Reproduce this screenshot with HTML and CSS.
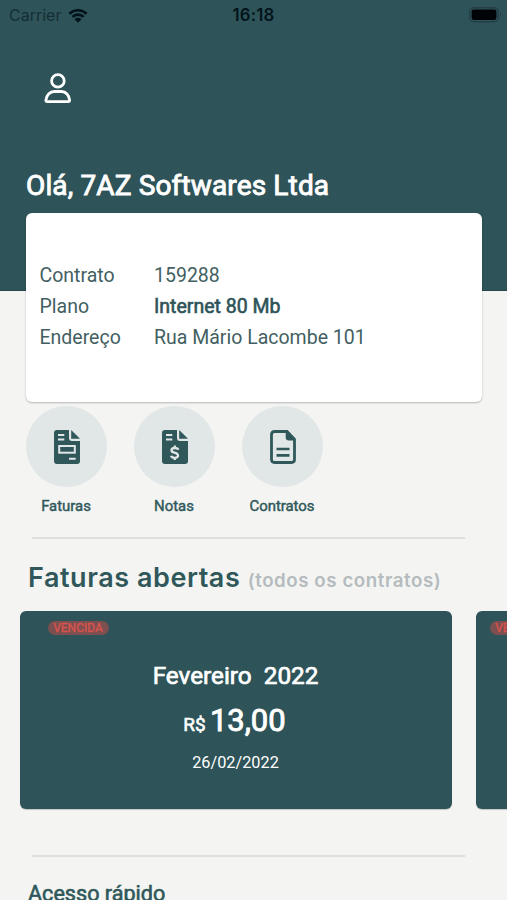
FILE: index.html
```html
<!DOCTYPE html>
<html lang="pt-BR">
<head>
<meta charset="utf-8">
<meta name="viewport" content="width=device-width, initial-scale=1">
<title>Central do assinante</title>
<link rel="stylesheet" href="styles.css">
</head>
<body>
<header class="header">
  <div class="status">
    <div class="carrier"><span>Carrier</span>
      <svg class="wifi" viewBox="0 0 20 15" width="20" height="15"><path d="M1.4 5.7a12.4 12.4 0 0 1 17.2 0M4.4 8.9a8 8 0 0 1 11.2 0" fill="none" stroke="currentColor" stroke-width="2.6"/><path d="M6.5 11.2a5 5 0 0 1 7 0L10 14.7z" fill="currentColor"/></svg>
    </div>
    <span class="clock">16:18</span>
    <svg class="battery" viewBox="0 0 34 16" width="34" height="16"><rect x=".7" y=".7" width="28.6" height="14" rx="4" fill="none" stroke="#233e44" stroke-width="1.4"/><rect x="2.6" y="2.4" width="24.8" height="10.6" rx="2.2" fill="#000407"/><path d="M31 5.5q2 2 0 4.5z" fill="#233e44"/></svg>
  </div>
  <svg class="user" viewBox="0 0 28 32" width="28" height="32" fill="none" stroke="#fff" stroke-width="2.8"><circle cx="13.9" cy="8.9" r="6.3"/><path d="M3.3 29.6h20.8q1.6 0 1.5-1.5c-.5-4.8-3.7-8.6-8.1-8.6h-7.2c-4.4 0-7.9 3.8-8.4 8.6q-.2 1.5 1.4 1.5z"/></svg>
  <h1 class="greeting">Olá, 7AZ Softwares Ltda</h1>
</header>
<main>
  <dl class="contract">
    <dt>Contrato</dt><dd>159288</dd>
    <dt>Plano</dt><dd class="strong">Internet 80 Mb</dd>
    <dt>Endereço</dt><dd>Rua Mário Lacombe 101</dd>
  </dl>
  <nav class="actions">
    <a class="action"><span class="circle">
      <svg viewBox="0 0 26 34" width="26" height="34"><path d="M3 0h12v8q0 3 3 3h8v20q0 3-3 3H3q-3 0-3-3V3q0-3 3-3z" fill="#30585b"/><path d="M17.2 0 26 8.7h-8.8z" fill="#30585b"/><path d="M4 5h6.3M4 9.6h6.3M15 28.8h6.7" stroke="#e1e6e7" stroke-width="2"/><rect x="5.2" y="16" width="15.6" height="6.7" fill="none" stroke="#e1e6e7" stroke-width="2"/></svg>
    </span><span class="label">Faturas</span></a>
    <a class="action"><span class="circle">
      <svg viewBox="0 0 26 34" width="26" height="34"><path d="M3 0h12v8q0 3 3 3h8v20q0 3-3 3H3q-3 0-3-3V3q0-3 3-3z" fill="#30585b"/><path d="M17.2 0 26 8.7h-8.8z" fill="#30585b"/><path d="M4 5h6.3M4 9.6h6.3" stroke="#e1e6e7" stroke-width="2"/><path d="M16.3 19.7q-.5-1.7-3.5-1.7c-4.2 0-4.3 3.9-.5 4.6 5 1 4.8 5.2.5 5.2q-3.2 0-3.7-2M12.8 15.6v2.4M12.8 27.6V30" fill="none" stroke="#e1e6e7" stroke-width="2.3"/></svg>
    </span><span class="label">Notas</span></a>
    <a class="action"><span class="circle">
      <svg viewBox="0 0 26 34" width="26" height="34"><path d="M4 1.5h13l7.5 7.7v20.3q0 3-3 3H4.5q-3 0-3-3v-25q0-3 3-3z" fill="none" stroke="#30585b" stroke-width="2.8"/><path d="M15.7 1h2L25 8.5v2h-6q-3.3 0-3.3-3.3z" fill="#30585b"/><path d="M6.5 19h13M6.5 25.4h13" stroke="#30585b" stroke-width="2.6"/></svg>
    </span><span class="label">Contratos</span></a>
  </nav>
  <hr>
  <h2 class="bills-title">Faturas abertas <small>(todos os contratos)</small></h2>
  <section class="carousel">
    <article class="bill">
      <span class="badge">VENCIDA</span>
      <div class="month">Fevereiro&nbsp; 2022</div>
      <div class="amount"><span>R$</span> 13,00</div>
      <div class="date">26/02/2022</div>
    </article>
    <article class="bill next"><span class="badge">VENCIDA</span></article>
  </section>
  <hr class="second">
  <h2 class="quick">Acesso rápido</h2>
</main>
</body>
</html>
```
FILE: styles.css
```css
* { box-sizing: border-box; }
html, body { margin: 0; height: 900px; overflow: hidden; }
body { background: #f4f5f2; color: #30585b; font-family: Roboto, "Liberation Sans", sans-serif; }
h1, h2, dl, dd { margin: 0; font-weight: 400; }
svg { display: block; flex: none; }
.header { height: 291px; background: #2e5358; border-bottom: 1px solid #25464b; }
.status { display: grid; grid-template-columns: 1fr auto 1fr; height: 30px; padding: 0 9px; align-items: center; font-family: Inter, sans-serif; color: #03131b; }
.carrier { display: flex; align-items: center; gap: 7px; font-size: 16px; letter-spacing: 0; color: #142f36; }
.wifi { color: #03131b; }
.clock { font-size: 16.8px; font-weight: 600; letter-spacing: .15px; }
.battery { justify-self: end; margin-right: -5px; }
.user { margin: 42px 0 0 44px; }
.greeting { margin: 64px 0 0 26px; height: 36px; font-size: 28px; line-height: 36px; letter-spacing: .14px; white-space: nowrap; color: #fff; -webkit-text-stroke: .9px; }
.contract { position: relative; display: grid; grid-template-columns: 114.5px 1fr; align-content: start; grid-auto-rows: 31px; width: 456px; height: 189px; margin: -78px 0 0 26px; padding: 47px 13.5px 0; border-radius: 6px; background: #fff; box-shadow: 0 1px 2px rgba(0,0,0,.25); font-size: 19.5px; line-height: 32px; color: #435f62; }
.strong { color: #2e5358; -webkit-text-stroke: .6px; }
.actions { display: flex; gap: 27px; margin: 4px 0 0 26px; height: 131px; }
.action { width: 81px; display: flex; flex-direction: column; align-items: center; }
.circle { display: grid; place-items: center; width: 81px; height: 81px; border-radius: 50%; background: #e1e6e7; }
.label { margin: 9px 1px 0 0; font-size: 14.9px; line-height: 20px; -webkit-text-stroke: .45px; }
hr { width: 433px; height: 2px; margin: 0 0 0 32px; border: 0; background: #dddfdf; }
.bills-title { margin: 21px 0 0 28px; height: 36px; font: 600 27px/36px Inter, sans-serif; letter-spacing: .55px; white-space: nowrap; }
.bills-title small { font-size: 18.7px; letter-spacing: .56px; color: #b5bbbe; }
.carousel { display: flex; gap: 24px; margin-top: 15px; padding-left: 19.5px; overflow: hidden; height: 200px; }
.bill { flex: 0 0 432px; height: 198px; border-radius: 6px; background: #2e5358; color: #fff; padding-top: 10px; text-align: center; box-shadow: 0 1px 1px rgba(0,0,0,.2); }
.badge { display: block; width: 61px; height: 14px; margin-left: 28px; border-radius: 7px; background: #7c4f50; color: #d8534d; font-size: 12px; line-height: 15px; -webkit-text-stroke: .4px; }
.next .badge { margin-left: 14px; }
.month { margin-top: 25px; font-size: 24.3px; line-height: 32px; -webkit-text-stroke: .7px; }
.amount { margin: 9px 2px 0 0; font-size: 31px; line-height: 40px; -webkit-text-stroke: .9px; word-spacing: -3.5px; }
.amount span { font-size: 19px; -webkit-text-stroke: .6px; }
.date { margin-top: 8px; font-size: 16.3px; line-height: 20px; }
.second { margin-top: 44px; }
.quick { margin: 23px 0 0 28px; font-size: 21.6px; line-height: 28px; -webkit-text-stroke: .6px; }
```
